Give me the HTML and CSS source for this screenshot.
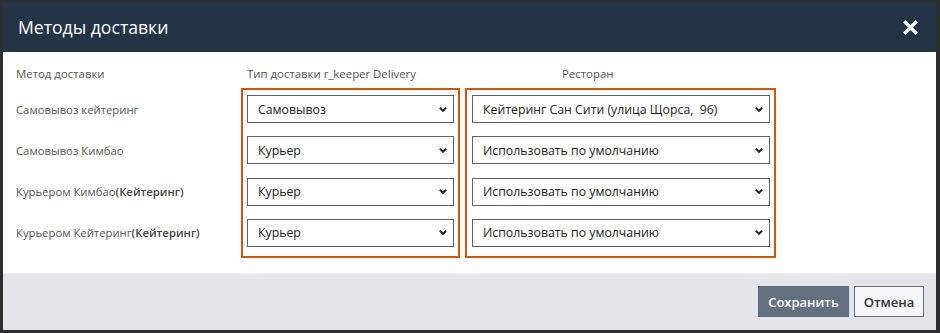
FILE: index.html
```html
<!DOCTYPE html>
<html lang="ru">
<head>
<meta charset="utf-8">
<title>Методы доставки</title>
<link rel="stylesheet" href="styles.css">
</head>
<body>
<div class="dialog">
  <div class="dlg-header">
    <h1 class="dlg-title">Методы доставки</h1>
    <button class="dlg-close" aria-label="Закрыть">
      <svg width="15" height="15" viewBox="0 0 15 15"><path d="M2.5 2.5 L12.5 12.5 M12.5 2.5 L2.5 12.5" stroke="#fff" stroke-width="3.4" stroke-linecap="square"/></svg>
    </button>
  </div>
  <div class="dlg-body">
    <div class="col col-labels">
      <div class="col-head">Метод доставки</div>
      <div class="labels">
        <div class="row-label">Самовывоз кейтеринг</div>
        <div class="row-label">Самовывоз Кимбао</div>
        <div class="row-label">Курьером Кимбао<b>(Кейтеринг)</b></div>
        <div class="row-label">Курьером Кейтеринг<b>(Кейтеринг)</b></div>
      </div>
    </div>
    <div class="col col-type">
      <div class="col-head head-type">Тип доставки r_keeper Delivery</div>
      <div class="box box-type">
        <div class="select"><span>Самовывоз</span><svg class="chev" width="10" height="7" viewBox="0 0 10 7"><path d="M1.8 1.6 L5 4.8 L8.2 1.6" fill="none" stroke="#222" stroke-width="2"/></svg></div>
        <div class="select"><span>Курьер</span><svg class="chev" width="10" height="7" viewBox="0 0 10 7"><path d="M1.8 1.6 L5 4.8 L8.2 1.6" fill="none" stroke="#222" stroke-width="2"/></svg></div>
        <div class="select"><span>Курьер</span><svg class="chev" width="10" height="7" viewBox="0 0 10 7"><path d="M1.8 1.6 L5 4.8 L8.2 1.6" fill="none" stroke="#222" stroke-width="2"/></svg></div>
        <div class="select"><span>Курьер</span><svg class="chev" width="10" height="7" viewBox="0 0 10 7"><path d="M1.8 1.6 L5 4.8 L8.2 1.6" fill="none" stroke="#222" stroke-width="2"/></svg></div>
      </div>
    </div>
    <div class="col col-rest">
      <div class="col-head head-rest">Ресторан</div>
      <div class="box box-rest">
        <div class="select"><span>Кейтеринг Сан Сити (улица Щорса,&nbsp; 96)</span><svg class="chev" width="10" height="7" viewBox="0 0 10 7"><path d="M1.8 1.6 L5 4.8 L8.2 1.6" fill="none" stroke="#222" stroke-width="2"/></svg></div>
        <div class="select"><span>Использовать по умолчанию</span><svg class="chev" width="10" height="7" viewBox="0 0 10 7"><path d="M1.8 1.6 L5 4.8 L8.2 1.6" fill="none" stroke="#222" stroke-width="2"/></svg></div>
        <div class="select"><span>Использовать по умолчанию</span><svg class="chev" width="10" height="7" viewBox="0 0 10 7"><path d="M1.8 1.6 L5 4.8 L8.2 1.6" fill="none" stroke="#222" stroke-width="2"/></svg></div>
        <div class="select"><span>Использовать по умолчанию</span><svg class="chev" width="10" height="7" viewBox="0 0 10 7"><path d="M1.8 1.6 L5 4.8 L8.2 1.6" fill="none" stroke="#222" stroke-width="2"/></svg></div>
      </div>
    </div>
  </div>
  <div class="dlg-footer">
    <button class="btn btn-primary">Сохранить</button>
    <button class="btn btn-secondary">Отмена</button>
  </div>
</div>
</body>
</html>
```

FILE: styles.css
```css
* { box-sizing: border-box; }
html, body { margin: 0; padding: 0; }
body {
  width: 940px;
  height: 333px;
  background: #2e2e2e;
  font-family: "Open Sans", "Noto Sans", "Liberation Sans", sans-serif;
  overflow: hidden;
}
.dialog {
  margin: 2px 4px 0 3px;
  width: 933px;
  height: 328px;
  background: #fff;
  display: flex;
  flex-direction: column;
}
.dlg-header {
  height: 50px;
  background: #243447;
  display: flex;
  align-items: center;
  justify-content: space-between;
  padding: 0 18px 0 15px;
}
.dlg-title {
  margin: 0;
  color: #fff;
  font-size: 17.6px;
  font-weight: 400;
  line-height: 24px;
}
.dlg-close {
  border: 0;
  background: none;
  padding: 0;
  width: 15px;
  height: 15px;
  display: flex;
}
.dlg-body {
  flex: 1;
  display: flex;
  padding: 14px 0 14px 13px;
}
.col { display: flex; flex-direction: column; }
.col-labels { width: 225px; }
.col-head {
  height: 22px;
  font-size: 11.4px;
  line-height: 16px;
  color: #555;
}
.head-type { padding-left: 6px; }
.head-rest { padding-left: 97px; }
.labels {
  display: flex;
  flex-direction: column;
  padding-top: 7px;
  gap: 13.3px;
}
.row-label {
  height: 28px;
  display: flex;
  align-items: center;
  font-size: 11.3px;
  color: #555;
  white-space: nowrap;
}
.row-label b { font-weight: 600; color: #444; }
.col-rest { margin-left: 5px; }
.box {
  border: 2px solid #d1570f;
  padding: 5px 4px 9px;
  display: flex;
  flex-direction: column;
  gap: 13.3px;
}
.box-type { width: 219px; }
.box-rest { width: 311px; padding-left: 5px; padding-right: 4px; }
.select {
  height: 28px;
  border: 1px solid #62626a;
  background: #fff;
  display: flex;
  align-items: center;
  justify-content: space-between;
  padding: 0 5px 0 10px;
  font-size: 12.3px;
  color: #222;
  white-space: nowrap;
}
.chev { flex: none; }
.dlg-footer {
  height: 57px;
  background: #e4e5e9;
  border-top: 1px solid #eeeff2;
  display: flex;
  justify-content: flex-end;
  align-items: flex-start;
  gap: 5px;
  padding: 12px 12px 0 0;
}
.btn {
  height: 31px;
  font-family: "Open Sans", "Noto Sans", "Liberation Sans", sans-serif;
  font-size: 13px;
  font-weight: 600;
  padding: 0;
}
.btn-primary {
  width: 91px;
  background: #627080;
  color: #fff;
  border: 1px solid #5c6a7a;
}
.btn-secondary {
  width: 70px;
  background: #f6f6f8;
  color: #2d3440;
  border: 1px solid #66727f;
}
```
